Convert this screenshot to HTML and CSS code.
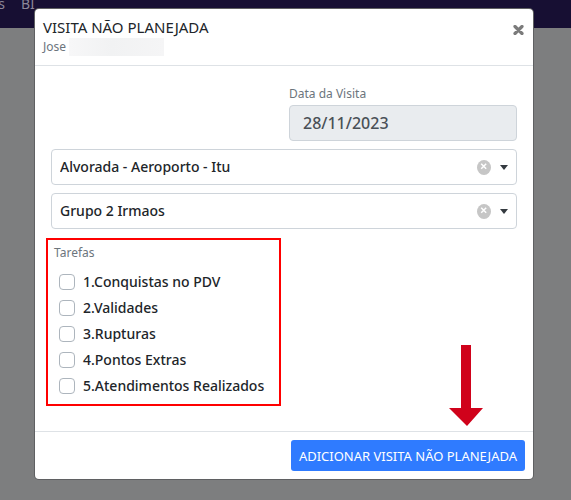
FILE: index.html
```html
<!DOCTYPE html>
<html lang="pt-BR">
<head>
<meta charset="utf-8">
<meta name="viewport" content="width=device-width, initial-scale=1">
<title>Visita não planejada</title>
<link rel="stylesheet" href="styles.css">
</head>
<body>
<nav class="navbar"><span>s</span><a href="#">BI</a></nav>
<div class="overlay">
  <form class="modal" role="dialog" aria-labelledby="title">
    <header class="modal-header">
      <div>
        <h1 class="title" id="title">VISITA NÃO PLANEJADA</h1>
        <p class="subtitle">Jose <span class="redacted"></span></p>
      </div>
      <button class="close" type="button" aria-label="Fechar">
        <svg width="11" height="10" viewBox="0 0 11 10"><path d="M2 1.5 9 8.5M9 1.5 2 8.5" stroke="#7b7b7b" stroke-width="3.2" stroke-linecap="round"/></svg>
      </button>
    </header>
    <div class="modal-body">
      <div class="field-row">
        <div class="field">
          <label class="label" for="date">Data da Visita</label>
          <input class="date" id="date" type="text" value="28/11/2023" disabled>
        </div>
      </div>
      <div class="combo">
        <select class="select" aria-label="Loja"><option>Alvorada - Aeroporto - Itu</option></select>
        <button class="clear" type="button" aria-label="Limpar loja">
          <svg width="14" height="15" viewBox="0 0 14 15"><ellipse cx="7" cy="7.5" rx="7" ry="7.5" fill="#c6c6c6"/><path d="M4.2 3.8 9.2 8.8M9.2 3.8 4.2 8.8" stroke="#fff" stroke-width="1.5"/></svg>
        </button>
        <svg class="caret" width="8" height="5" viewBox="0 0 8 5"><path d="M0 0h8L4 5z" fill="#343a40"/></svg>
      </div>
      <div class="combo">
        <select class="select" aria-label="Grupo"><option>Grupo 2 Irmaos</option></select>
        <button class="clear" type="button" aria-label="Limpar grupo">
          <svg width="14" height="15" viewBox="0 0 14 15"><ellipse cx="7" cy="7.5" rx="7" ry="7.5" fill="#c6c6c6"/><path d="M4.2 3.8 9.2 8.8M9.2 3.8 4.2 8.8" stroke="#fff" stroke-width="1.5"/></svg>
        </button>
        <svg class="caret" width="8" height="5" viewBox="0 0 8 5"><path d="M0 0h8L4 5z" fill="#343a40"/></svg>
      </div>
      <div class="tasks-row">
        <fieldset class="tasks">
          <legend class="label tasks-label">Tarefas</legend>
          <label class="task"><input class="check" type="checkbox">1.Conquistas no PDV</label>
          <label class="task"><input class="check" type="checkbox">2.Validades</label>
          <label class="task"><input class="check" type="checkbox">3.Rupturas</label>
          <label class="task"><input class="check" type="checkbox">4.Pontos Extras</label>
          <label class="task"><input class="check" type="checkbox">5.Atendimentos Realizados</label>
        </fieldset>
        <svg class="arrow" width="36" height="81" viewBox="0 0 36 81"><path d="M12 0h10v63h12L18 81 0 63h12z" fill="#d0021b"/></svg>
      </div>
    </div>
    <footer class="modal-footer">
      <button class="submit" type="submit">ADICIONAR VISITA NÃO PLANEJADA</button>
    </footer>
  </form>
</div>
</body>
</html>
```
FILE: styles.css
```css
* { box-sizing: border-box; }

body {
  margin: 0;
  min-height: 100vh;
  background: #7d7e7f;
  color: #212529;
  font: 14px/20px "Noto Sans", sans-serif;
}

button, input, select { font: inherit; color: inherit; }

.navbar {
  display: flex;
  gap: 16px;
  height: 28px;
  background: #170f33;
  color: #8b8799;
  line-height: 8px;
}
.navbar a { color: inherit; text-decoration: none; }
.navbar span { display: flex; justify-content: flex-end; width: 5px; }

.overlay {
  position: absolute;
  inset: 0;
  padding: 9px 38px 21px 35px;
}

.modal {
  display: flex;
  flex-direction: column;
  min-height: 100%;
  background: #fff;
  border-radius: 4px;
  box-shadow: 0 0 0 1px #5f6062;
}

.modal-header {
  display: flex;
  justify-content: space-between;
  align-items: flex-start;
  padding: 8px 9px 8px 8px;
  border-bottom: 1px solid #dee2e6;
}
.title { margin: 0; font-size: 15px; font-weight: 400; line-height: 20px; }
.subtitle {
  display: flex;
  align-items: center;
  gap: 3px;
  margin: 0;
  color: #6c757d;
  font-size: 12px;
  line-height: 20px;
}
.redacted {
  width: 95px;
  height: 18px;
  background: linear-gradient(90deg, #f7f7f8, #f1f2f3 45%, #f5f5f6);
}
.close, .clear { display: flex; padding: 0; border: 0; background: none; }
.close { padding-top: 8px; }

.modal-body { flex: 1; padding: 18px 16px 0; }
.field-row { display: grid; grid-template-columns: 1fr 1fr; gap: 10px; }
.field { grid-column: 2; }
.label {
  display: block;
  color: #6c757d;
  font-size: 12px;
  font-weight: 400;
  line-height: 20px;
}
.date {
  display: block;
  width: 100%;
  height: 36px;
  margin-top: 1px;
  padding: 0 13px;
  border: 1px solid #ced4da;
  border-radius: 4px;
  background: #e9ecef;
  color: #495057;
  font-size: 16px;
  font-weight: 500;
}

.combo {
  display: flex;
  align-items: center;
  height: 36px;
  margin-top: 8px;
  padding-right: 8px;
  border: 1px solid #ced4da;
  border-radius: 4px;
}
.select {
  flex: 1;
  height: 100%;
  padding: 0 8px;
  border: 0;
  background: none;
  appearance: none;
  font-weight: 500;
}
.caret { margin-left: 9px; }

.tasks-row {
  display: flex;
  justify-content: space-between;
  align-items: flex-end;
  margin: 9px 32px 0 -5px;
}
.tasks {
  width: 235px;
  height: 168px;
  margin: 0;
  padding: 3px 0 0 11px;
  border: 2px solid #f00;
  font-weight: 500;
}
.tasks-label { float: left; width: 100%; margin: 0 -5px 6px; padding: 0; }
.task {
  display: flex;
  clear: both;
  align-items: center;
  gap: 8px;
  height: 26px;
  white-space: nowrap;
}
.check {
  flex: none;
  width: 16px;
  height: 16px;
  margin: 0;
  border: 1px solid #adb5bd;
  border-radius: 4px;
  background: #fff;
  appearance: none;
}
.check:checked { background: #2f7bff; }
.arrow { margin-bottom: -20px; }

.modal-footer {
  display: flex;
  justify-content: flex-end;
  padding: 8px;
  border-top: 1px solid #dee2e6;
}
.submit {
  height: 31px;
  padding: 0 8px;
  border: 0;
  border-radius: 3px;
  background: #2f7bff;
  color: #fff;
  font-size: 13px;
}
```
